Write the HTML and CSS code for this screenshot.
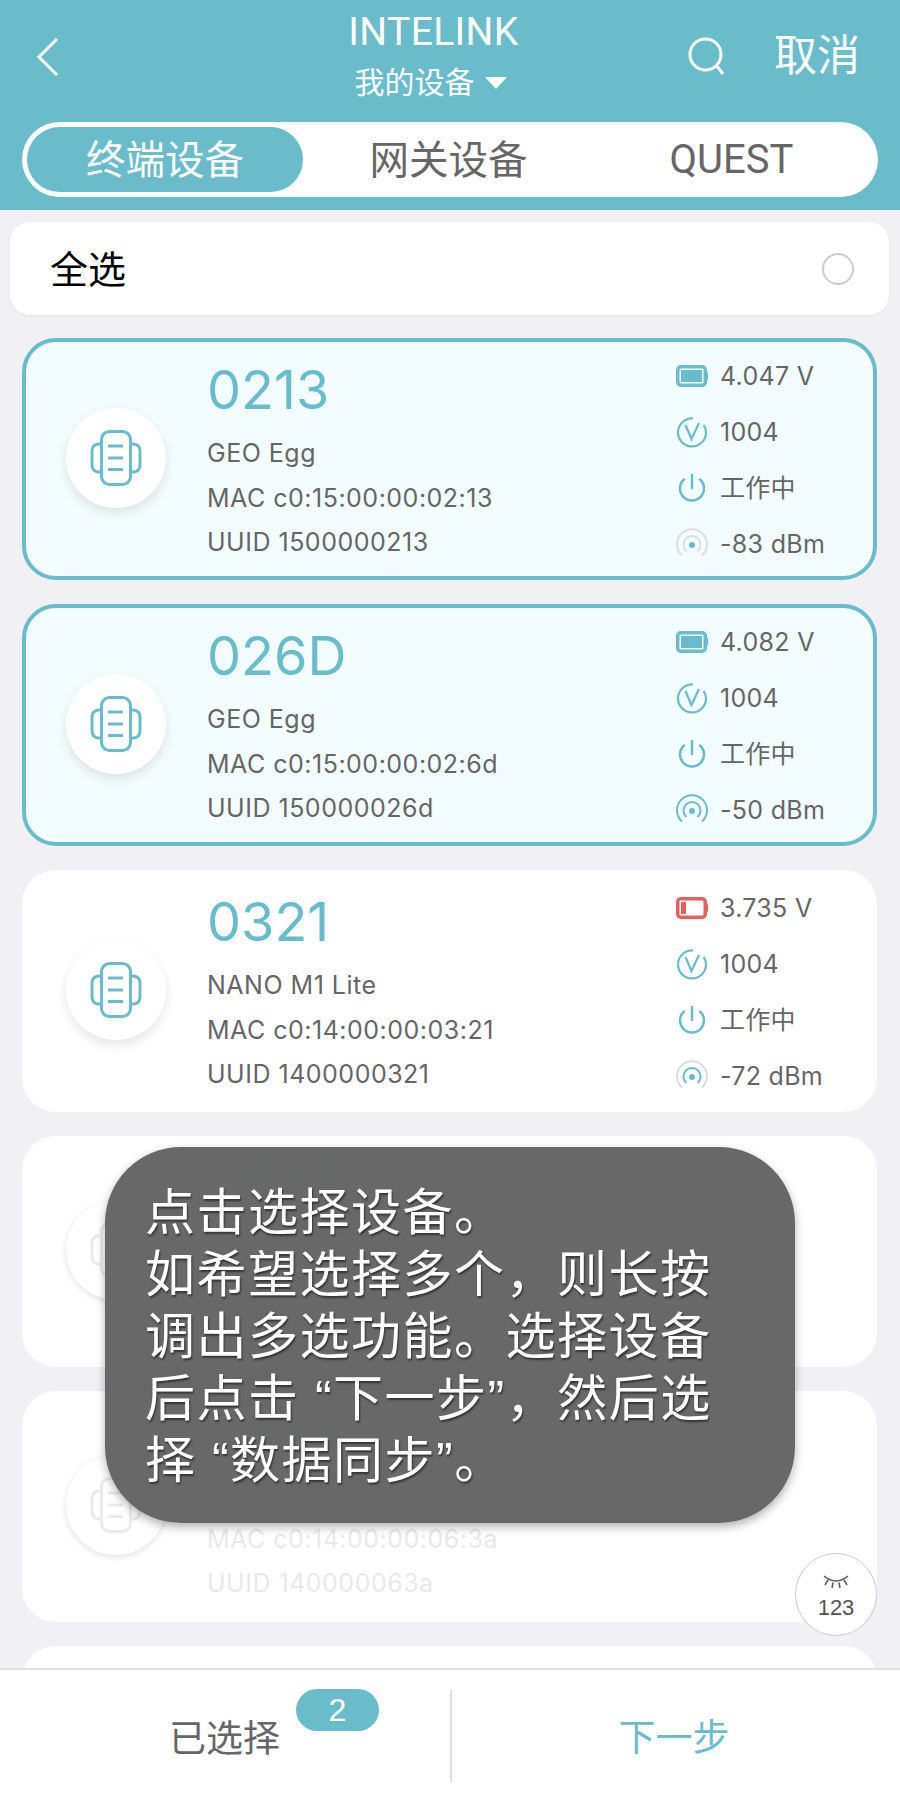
FILE: index.html
```html
<!DOCTYPE html>
<html lang="zh-CN">
<head>
<meta charset="utf-8">
<title>INTELINK</title>
<link rel="stylesheet" href="styles.css">
</head>
<body>
<svg class="defs" width="0" height="0" aria-hidden="true">
  <symbol id="i-device" viewBox="0 0 52 56">
    <rect x="11.500" y="1.500" width="29" height="53" rx="8" fill="none" stroke="currentColor" stroke-width="3"/>
    <path d="M11 14H8Q2 15 2 21V35Q2 41 8 42H11M41 14H44Q50 15 50 21V35Q50 41 44 42H41M18 16H33M18 28H33M18 39.500H33" fill="none" stroke="currentColor" stroke-width="3"/>
  </symbol>
  <symbol id="i-batt" viewBox="0 0 32 22">
    <rect x="1.750" y="1.750" width="27.500" height="18.500" rx="3" fill="none" stroke="currentColor" stroke-width="3.500"/>
    <path d="M30 7h1a1 1 0 0 1 1 1v6a1 1 0 0 1-1 1h-1z" fill="currentColor"/>
    <rect x="5" y="5" width="21" height="12" fill="currentColor"/>
  </symbol>
  <symbol id="i-batt-low" viewBox="0 0 32 22">
    <rect x="1.750" y="1.750" width="27.500" height="18.500" rx="3" fill="none" stroke="currentColor" stroke-width="3.500"/>
    <path d="M30 7h1a1 1 0 0 1 1 1v6a1 1 0 0 1-1 1h-1z" fill="currentColor"/>
    <rect x="5" y="5" width="5" height="12" rx="1" fill="currentColor"/>
  </symbol>
  <symbol id="i-ver" viewBox="0 0 32 32">
    <path d="M17 2.500A14 14 0 1 0 30 16.500Q30 12 27.500 9M9.500 9L15.500 23L23 7" fill="none" stroke="currentColor" stroke-width="2.200"/>
  </symbol>
  <symbol id="i-power" viewBox="0 0 32 32">
    <path d="M8 7.500A12 12 0 1 0 24 7.500M16 3V16" fill="none" stroke="currentColor" stroke-width="2.500" stroke-linecap="round"/>
  </symbol>
  <symbol id="i-arc-outer" viewBox="0 0 32 32">
    <path d="M6 27.500A15 15 0 1 1 26 27.500" fill="none" stroke="currentColor" stroke-width="2"/>
  </symbol>
  <symbol id="i-arc-inner" viewBox="0 0 32 32">
    <path d="M10.500 23A8.500 8.500 0 1 1 21.500 23" fill="none" stroke="currentColor" stroke-width="2"/>
  </symbol>
  <symbol id="i-dot" viewBox="0 0 32 32">
    <circle cx="16" cy="17" r="3" fill="currentColor"/>
  </symbol>
</svg>

<div class="page">
  <header class="head">
    <div class="nav">
      <svg class="back" viewBox="0 0 24 40"><path d="M21 2L3 20L21 38" fill="none" stroke="currentColor" stroke-width="3"/></svg>
      <div class="nav-title">
        <div class="brand">INTELINK</div>
        <div class="sub"><span>我的设备</span><i class="tri"></i></div>
      </div>
      <div class="nav-right">
        <svg class="search" viewBox="0 0 38 38"><circle cx="17.500" cy="17.500" r="15.500" fill="none" stroke="currentColor" stroke-width="3"/><path d="M28 28L35 37" fill="none" stroke="currentColor" stroke-width="3"/></svg>
        <span class="cancel">取消</span>
      </div>
    </div>
    <div class="tabs">
      <div class="tab active"><span class="cjk">终端设备</span></div>
      <div class="tab"><span class="cjk">网关设备</span></div>
      <div class="tab quest">QUEST</div>
    </div>
  </header>

  <main class="list">
    <div class="all"><span class="all-label">全选</span><i class="radio"></i></div>

    <article class="card sel">
      <div class="avatar"><svg class="dev"><use href="#i-device"/></svg></div>
      <div class="info">
        <div class="num">0213</div>
        <div class="ln">GEO Egg</div>
        <div class="ln">MAC c0:15:00:00:02:13</div>
        <div class="ln">UUID 1500000213</div>
      </div>
      <div class="stats">
        <div class="st"><svg class="ic teal bt"><use href="#i-batt"/></svg><span>4.047 V</span></div>
        <div class="st"><svg class="ic teal"><use href="#i-ver"/></svg><span>1004</span></div>
        <div class="st"><svg class="ic teal"><use href="#i-power"/></svg><span class="cjk">工作中</span></div>
        <div class="st"><span class="sig"><svg class="ic gray"><use href="#i-arc-outer"/></svg><svg class="ic gray"><use href="#i-arc-inner"/></svg><svg class="ic teal"><use href="#i-dot"/></svg></span><span>-83 dBm</span></div>
      </div>
    </article>

    <article class="card sel">
      <div class="avatar"><svg class="dev"><use href="#i-device"/></svg></div>
      <div class="info">
        <div class="num">026D</div>
        <div class="ln">GEO Egg</div>
        <div class="ln">MAC c0:15:00:00:02:6d</div>
        <div class="ln">UUID 150000026d</div>
      </div>
      <div class="stats">
        <div class="st"><svg class="ic teal bt"><use href="#i-batt"/></svg><span>4.082 V</span></div>
        <div class="st"><svg class="ic teal"><use href="#i-ver"/></svg><span>1004</span></div>
        <div class="st"><svg class="ic teal"><use href="#i-power"/></svg><span class="cjk">工作中</span></div>
        <div class="st"><span class="sig"><svg class="ic teal"><use href="#i-arc-outer"/></svg><svg class="ic teal"><use href="#i-arc-inner"/></svg><svg class="ic teal"><use href="#i-dot"/></svg></span><span>-50 dBm</span></div>
      </div>
    </article>

    <article class="card">
      <div class="avatar"><svg class="dev"><use href="#i-device"/></svg></div>
      <div class="info">
        <div class="num">0321</div>
        <div class="ln">NANO M1 Lite</div>
        <div class="ln">MAC c0:14:00:00:03:21</div>
        <div class="ln">UUID 1400000321</div>
      </div>
      <div class="stats">
        <div class="st"><svg class="ic red bt"><use href="#i-batt-low"/></svg><span>3.735 V</span></div>
        <div class="st"><svg class="ic teal"><use href="#i-ver"/></svg><span>1004</span></div>
        <div class="st"><svg class="ic teal"><use href="#i-power"/></svg><span class="cjk">工作中</span></div>
        <div class="st"><span class="sig"><svg class="ic gray"><use href="#i-arc-outer"/></svg><svg class="ic teal"><use href="#i-arc-inner"/></svg><svg class="ic teal"><use href="#i-dot"/></svg></span><span>-72 dBm</span></div>
      </div>
    </article>

    <article class="card ghost">
      <div class="avatar"><svg class="dev"><use href="#i-device"/></svg></div>
      <div class="info">
        <div class="num">0648</div>
        <div class="ln">NANO M1</div>
      </div>
    </article>

    <article class="card ghost">
      <div class="avatar"><svg class="dev"><use href="#i-device"/></svg></div>
      <div class="info">
        <div class="num">063A</div>
        <div class="ln">NANO M1</div>
        <div class="ln">MAC c0:14:00:00:06:3a</div>
        <div class="ln">UUID 140000063a</div>
      </div>
    </article>

    <article class="card ghost"></article>
  </main>

  <footer class="foot">
    <div class="foot-l"><span class="chosen">已选择</span><span class="badge">2</span></div>
    <div class="foot-r">下一步</div>
  </footer>

  <div class="toast">点击选择设备。<br>如希望选择多个，则长按<br>调出多选功能。选择设备<br>后点击 “下一步”，然后选<br>择 “数据同步”。</div>

  <div class="kbd">
    <svg class="eye" viewBox="0 0 28 18"><path d="M2 3Q14 13 26 3M6 7L3 12M11 9.500L10 15M17 9.500L18 15M22 7L25 12" fill="none" stroke="currentColor" stroke-width="1.500"/></svg>
    <span>123</span>
  </div>
</div>
</body>
</html>
```

FILE: styles.css
```css
* { box-sizing: border-box; }
html, body { margin: 0; padding: 0; }
body {
  font-family: "Liberation Sans", "Noto Sans CJK SC", sans-serif;
  background: #f0f0f5;
}
.defs { position: absolute; }

.page {
  position: relative;
  width: 900px;
  height: 1800px;
  display: flex;
  flex-direction: column;
  overflow: hidden;
}

/* header */
.head {
  height: 210px;
  flex: none;
  background: #6bbccb;
  color: #fff;
  padding: 0 22px;
}
.nav {
  height: 122px;
  display: flex;
  position: relative;
  justify-content: center;
}
.back {
  position: absolute;
  left: 14px;
  top: 37px;
  width: 24px;
  height: 40px;
}
.nav-title {
  display: flex;
  flex-direction: column;
  align-items: center;
  padding-top: 10px;
  margin-right: 33px;
}
.brand {
  font-family: "Roboto", sans-serif;
  font-weight: 400;
  font-size: 39px;
  line-height: 44px;
  letter-spacing: .4px;
}
.sub {
  display: flex;
  align-items: center;
  gap: 11px;
  font-size: 30px;
  line-height: 40px;
  margin: 9px 5px 0 0;
}
.tri {
  width: 0;
  height: 0;
  border-left: 11px solid transparent;
  border-right: 11px solid transparent;
  border-top: 12px solid #fff;
}
.nav-right {
  position: absolute;
  right: 0;
  top: 30px;
  display: flex;
  align-items: center;
  gap: 48px;
  padding-right: 18px;
}
.search { width: 38px; height: 38px; }
.cancel { font-size: 43px; line-height: 52px; }

.tabs {
  height: 75px;
  background: #fff;
  border-radius: 38px;
  padding: 5px;
  display: flex;
}
.tab {
  flex: 1;
  display: flex;
  align-items: center;
  justify-content: center;
  font-size: 39.500px;
  color: #666;
  border-radius: 33px;
}
.tab .cjk { position: relative; top: -3px; }
.tab.quest {
  font-family: "Roboto", sans-serif;
  font-size: 40px;
}
.tab.active {
  background: #6bbccb;
  color: #fff;
  flex: none;
  width: 276px;
  margin-right: 4px;
  border-radius: 33px;
}

/* list */
.list {
  flex: 1;
  min-height: 0;
  overflow: hidden;
  padding: 12px 23px 0 22px;
  display: flex;
  flex-direction: column;
  gap: 24px;
}
.all {
  flex: none;
  margin: 0 -12px -1px -12px;
  height: 93px;
  background: #fff;
  border-radius: 20px;
  box-shadow: 0 1px 3px rgba(0,0,0,.06);
  display: flex;
  align-items: center;
  justify-content: space-between;
  padding: 0 35px 0 40px;
  font-size: 38px;
  color: #000;
}
.all-label { position: relative; top: -2px; }
.radio {
  width: 32px;
  height: 32px;
  border: 2px solid #ccc;
  border-radius: 50%;
}

.card {
  flex: none;
  height: 242px;
  background: #fff;
  border: 4px solid #fff;
  border-radius: 34px;
  display: flex;
  color: #666;
  font-family: "Inter", "Noto Sans CJK SC", sans-serif;
}
.card.sel {
  background: #f3fcfe;
  border-color: #6bbccb;
}
.avatar {
  flex: none;
  width: 100px;
  height: 100px;
  margin: 66px 41px 0 40px;
  background: #fff;
  border-radius: 50%;
  box-shadow: 0 5px 12px rgba(0,0,0,.1);
  display: flex;
  align-items: center;
  justify-content: center;
}
.dev { width: 52px; height: 56px; color: #6bbccb; }
.info {
  flex: 1;
  padding-top: 17px;
}
.num {
  font-size: 54px;
  line-height: 62px;
  color: #6bbccb;
  margin-bottom: 10px;
}
.ln {
  font-size: 25px;
  line-height: 44.500px;
  letter-spacing: .5px;
  white-space: nowrap;
}
.stats {
  flex: none;
  width: 197px;
  padding-top: 6px;
}
.st {
  height: 56px;
  display: flex;
  align-items: center;
  gap: 12px;
  font-size: 25px;
  letter-spacing: .3px;
  white-space: nowrap;
}
.st .cjk { position: relative; top: -2px; }
.ic { width: 32px; height: 32px; flex: none; }
.ic.bt { height: 22px; }
.teal { color: #6bbccb; }
.gray { color: #ddd; }
.red { color: #e4605e; }
.sig {
  position: relative;
  width: 32px;
  height: 32px;
  flex: none;
  display: grid;
}
.sig .ic { grid-area: 1 / 1; }

.card.ghost { height: 231px; }
.ghost .avatar {
  margin-top: 60px;
  box-shadow: 0 2px 6px rgba(0,0,0,.12);
}
.ghost .dev { color: #777; opacity: .14; }
.ghost .info { padding-top: 5px; opacity: .14; }

/* footer */
.foot {
  flex: none;
  height: 132px;
  background: #fff;
  border-top: 2px solid #e2e2e4;
  display: flex;
  position: relative;
  z-index: 1;
}
.foot-l {
  flex: none;
  width: 452px;
  border-right: 2px solid #e0e0e0;
  margin: 20px 0 18px;
  position: relative;
  display: flex;
  align-items: center;
  padding: 0 0 0 169px;
  font-size: 37px;
  color: #666;
}
.badge {
  position: absolute;
  left: 296px;
  top: -1px;
  width: 83px;
  height: 42px;
  border-radius: 21px;
  background: #6bbccb;
  color: #fff;
  font-size: 32px;
  display: flex;
  align-items: center;
  justify-content: center;
}
.foot-r {
  flex: 1;
  display: flex;
  align-items: center;
  justify-content: center;
  padding: 0 4px 0 0;
  font-size: 37px;
  color: #6bbccb;
}

/* overlays */
.toast {
  position: absolute;
  left: 105px;
  top: 1147px;
  width: 690px;
  height: 376px;
  padding: 35px 20px 0 40px;
  border-radius: 76px;
  background: rgba(92,92,92,.93);
  box-shadow: 0 4px 10px rgba(0,0,0,.3);
  color: #fff;
  font-size: 50px;
  letter-spacing: 1.500px;
  line-height: 62px;
  text-shadow: 1px 2px 2px rgba(0,0,0,.5);
  white-space: nowrap;
  z-index: 2;
}
.kbd {
  position: absolute;
  left: 795px;
  top: 1553px;
  width: 82px;
  height: 83px;
  border-radius: 50%;
  background: #fff;
  border: 1px solid #ccc;
  display: flex;
  flex-direction: column;
  align-items: center;
  padding-top: 19px;
  color: #555;
  font-size: 22px;
  line-height: 27px;
  z-index: 2;
}
.eye { width: 28px; height: 18px; margin-bottom: 3px; }
```
